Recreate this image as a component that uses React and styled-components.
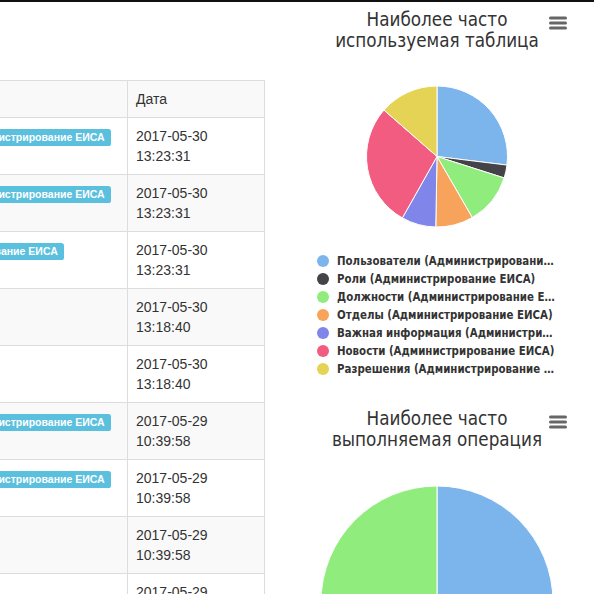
import React from "react";
import styled, { createGlobalStyle } from "styled-components";

const GlobalStyle = createGlobalStyle`
  html, body { margin: 0; padding: 0; background: #fff; }
  body {
    width: 594px; height: 594px; overflow: hidden;
    font-family: "Liberation Sans", Arial, sans-serif;
    font-size: 14px; line-height: 20px; color: #333;
  }
`;

const TopRule = styled.div`
  height: 2px;
  background: #111;
`;

const Page = styled.div`
  display: flex;
  align-items: flex-start;
  height: 592px;
  overflow: hidden;
`;

const LeftArea = styled.div`
  width: 265px;
  flex: none;
  overflow: hidden;
  padding-top: 78px;
`;

const Table = styled.table`
  border-collapse: collapse;
  margin-left: -147px;
  table-layout: fixed;
  width: 411px;
  border: 1px solid #ddd;
`;

const Row = styled.tr`
  &:nth-child(odd) { background: #f9f9f9; }
`;

const Cell = styled.td`
  box-sizing: border-box;
  border: 1px solid #ddd;
  padding: 8px;
  vertical-align: top;
  width: ${(p) => p.$w}px;
  font-weight: normal;
  text-align: left;
  white-space: ${(p) => (p.$nowrap ? "nowrap" : "normal")};
`;

const Badge = styled.span`
  display: inline;
  padding: 0.2em 0.6em 0.3em;
  font-size: 10.5px;
  font-weight: bold;
  line-height: 1;
  color: #fff;
  background: #5bc0de;
  border-radius: 0.25em;
  white-space: nowrap;
  vertical-align: baseline;
`;

const ChartColumn = styled.div`
  width: 286px;
  flex: none;
  margin-left: 29px;
  display: flex;
  flex-direction: column;
`;

const ChartCard = styled.div`
  position: relative;
  height: ${(p) => (p.$h ? `${p.$h}px` : "auto")};
  padding-top: 7px;
  box-sizing: border-box;
  display: flex;
  flex-direction: column;
  align-items: center;
`;

const ChartTitle = styled.div`
  font-family: "DejaVu Sans Condensed", "DejaVu Sans", sans-serif;
  font-stretch: condensed;
  font-size: 18.7px;
  line-height: 21px;
  color: #333;
  text-align: center;
`;

const MenuButton = styled.svg`
  position: absolute;
  top: 14px;
  right: 13px;
`;

const PieSvg = styled.svg`
  display: block;
  margin-top: ${(p) => p.$mt}px;
`;

const Legend = styled.ul`
  list-style: none;
  margin: 20px 0 0;
  padding: 0;
  width: 240px;
`;

const LegendItem = styled.li`
  display: flex;
  align-items: center;
  height: 18px;
  font-family: "DejaVu Sans Condensed", "DejaVu Sans", sans-serif;
  font-stretch: condensed;
  font-size: 11.4px;
  font-weight: bold;
  color: #333;
`;

const Dot = styled.span`
  width: 12px;
  height: 12px;
  border-radius: 50%;
  background: ${(p) => p.$c};
  flex: none;
  margin-right: 8px;
`;

const LegendText = styled.span`
  max-width: 218px;
  overflow: hidden;
  text-overflow: ellipsis;
  white-space: nowrap;
`;

const rows = [
  { t: "Пользователи", b: true, d: "2017-05-30 13:23:31" },
  { t: "Пользователи", b: true, d: "2017-05-30 13:23:31" },
  { t: "Файлы", b: true, d: "2017-05-30 13:23:31" },
  { t: "Вход", b: false, d: "2017-05-30 13:18:40" },
  { t: "Вход", b: false, d: "2017-05-30 13:18:40" },
  { t: "Пользователи", b: true, d: "2017-05-29 10:39:58" },
  { t: "Пользователи", b: true, d: "2017-05-29 10:39:58" },
  { t: "Вход", b: false, d: "2017-05-29 10:39:58" },
  { t: "Вход", b: false, d: "2017-05-29 10:39:58" },
];

const COLORS = ["#7cb5ec", "#434348", "#90ed7d", "#f7a35c", "#8085e9", "#f15c80", "#e4d354"];

function slicePath(cx, cy, r, a0, a1) {
  const rad = (a) => ((a - 90) * Math.PI) / 180;
  const x0 = cx + r * Math.cos(rad(a0));
  const y0 = cy + r * Math.sin(rad(a0));
  const x1 = cx + r * Math.cos(rad(a1));
  const y1 = cy + r * Math.sin(rad(a1));
  const large = a1 - a0 > 180 ? 1 : 0;
  return `M${cx},${cy} L${x0.toFixed(2)},${y0.toFixed(2)} A${r},${r} 0 ${large} 1 ${x1.toFixed(2)},${y1.toFixed(2)} Z`;
}

function Pie({ w, h, cx, cy, r, stops, colors, mt }) {
  const edges = [0, ...stops, 360];
  return (
    <PieSvg width={w} height={h} $mt={mt} viewBox={`0 0 ${w} ${h}`}>
      {colors.map((c, i) => (
        <path
          key={i}
          d={slicePath(cx, cy, r, edges[i], edges[i + 1])}
          fill={c}
          stroke="#fff"
          strokeWidth="1"
          strokeLinejoin="round"
        />
      ))}
    </PieSvg>
  );
}

function Menu() {
  return (
    <MenuButton width="18" height="14" viewBox="0 0 18 14">
      {[2, 7, 12].map((y) => (
        <line key={y} x1="1.5" x2="16.5" y1={y} y2={y} stroke="#666" strokeWidth="3" strokeLinecap="round" />
      ))}
    </MenuButton>
  );
}

const legend = [
  "Пользователи (Администрирование ЕИСА)",
  "Роли (Администрирование ЕИСА)",
  "Должности (Администрирование ЕИСА)",
  "Отделы (Администрирование ЕИСА)",
  "Важная информация (Администрирование ЕИСА)",
  "Новости (Администрирование ЕИСА)",
  "Разрешения (Администрирование ЕИСА)",
];

export default function App() {
  return (
    <>
      <GlobalStyle />
      <TopRule />
      <Page>
        <LeftArea>
          <Table>
            <tbody>
              <Row>
                <Cell as="th" $w={274}>Таблица</Cell>
                <Cell as="th" $w={137}>Дата</Cell>
              </Row>
              {rows.map((r, i) => (
                <Row key={i}>
                  <Cell $w={274} $nowrap>
                    {r.t} {r.b && <Badge>Администрирование ЕИСА</Badge>}
                  </Cell>
                  <Cell $w={137}>{r.d}</Cell>
                </Row>
              ))}
            </tbody>
          </Table>
        </LeftArea>
        <ChartColumn>
          <ChartCard $h={399}>
            <ChartTitle>
              Наиболее часто
              <br />
              используемая таблица
            </ChartTitle>
            <Menu />
            <Pie
              w={160}
              h={151}
              cx={80}
              cy={75.5}
              r={70.5}
              mt={30}
              stops={[97, 107.7, 150, 181, 209.4, 311.2]}
              colors={COLORS}
            />
            <Legend>
              {legend.map((l, i) => (
                <LegendItem key={i}>
                  <Dot $c={COLORS[i]} />
                  <LegendText>{l}</LegendText>
                </LegendItem>
              ))}
            </Legend>
          </ChartCard>
          <ChartCard>
            <ChartTitle>
              Наиболее часто
              <br />
              выполняемая операция
            </ChartTitle>
            <Menu />
            <Pie
              w={240}
              h={240}
              cx={120}
              cy={120}
              r={116}
              mt={32}
              stops={[180]}
              colors={["#7cb5ec", "#90ed7d"]}
            />
          </ChartCard>
        </ChartColumn>
      </Page>
    </>
  );
}
